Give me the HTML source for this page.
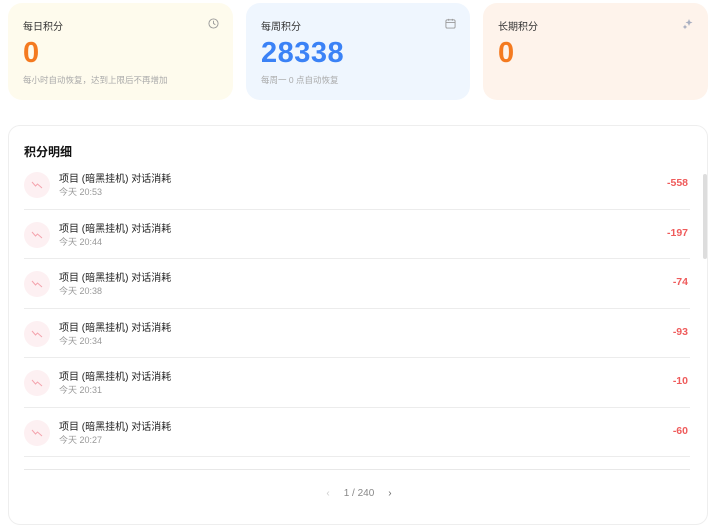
<!DOCTYPE html><html><head><meta charset="utf-8"><style>
*{margin:0;padding:0;box-sizing:border-box}
body{width:720px;height:518px;background:#fff;font-family:"Liberation Sans","Noto Sans CJK SC",sans-serif;position:relative;overflow:hidden;color:#222}
.card{position:absolute;top:3px;height:97px;border-radius:14px;padding:0 16px}
.t{position:absolute;left:15px;top:15px;font-size:10px;color:#333}
.n{position:absolute;left:15px;top:34px;font-size:29px;font-weight:bold;letter-spacing:0.5px}
.s{position:absolute;left:15px;top:71px;font-size:8.5px;color:#aaa}
.ic{position:absolute;right:14px;top:15px}
.panel{position:absolute;left:8px;top:125px;width:700px;height:400px;border:1px solid #eee;border-radius:12px}
h3{position:absolute;left:15px;top:17px;font-size:12px;font-weight:bold;color:#111}
.row{position:absolute;left:15px;width:666px;height:49.5px;border-bottom:1px solid #ececec}
.av{position:absolute;left:0;top:12px;width:26px;height:26px;border-radius:50%;background:#fdf0f2}
.av svg{position:absolute;left:7px;top:8px}
.r1{position:absolute;left:35px;top:10px;font-size:10px;color:#222}
.r2{position:absolute;left:35px;top:25px;font-size:9px;color:#999}
.amt{position:absolute;right:2px;top:17px;font-size:10.5px;font-weight:bold;color:#ef5b5b}
</style></head><body>
<div class="card" style="left:8px;width:225px;background:#fefbed">
<div class="t">每日积分</div><div class="n" style="color:#f47a20">0</div><div class="s">每小时自动恢复，达到上限后不再增加</div>
<svg class="ic" width="11" height="11" viewBox="0 0 12 12"><circle cx="6" cy="6" r="5" fill="none" stroke="#999" stroke-width="1"/><path d="M6 3v3l2 1.3" fill="none" stroke="#999" stroke-width="1"/></svg></div>
<div class="card" style="left:246px;width:224px;background:#eff6fe">
<div class="t">每周积分</div><div class="n" style="color:#3b82f6">28338</div><div class="s">每周一 0 点自动恢复</div>
<svg class="ic" width="11" height="11" viewBox="0 0 12 12"><rect x="1" y="2" width="10" height="9" rx="1.5" fill="none" stroke="#999"/><path d="M1 5h10M4 1v2M8 1v2" stroke="#999"/></svg></div>
<div class="card" style="left:483px;width:225px;background:#fef3eb">
<div class="t">长期积分</div><div class="n" style="color:#f47a20">0</div>
<svg class="ic" width="12" height="12" viewBox="0 0 12 12"><path d="M7 1l1 2.5 2.5 1-2.5 1L7 8 6 5.5l-2.5-1L6 3.5z M3 6.5l.7 1.6L5.3 9l-1.6.7L3 11.3l-.7-1.6L.7 9l1.6-.9z" fill="#a8aec0"/></svg></div>
<div class="panel">
<h3>积分明细</h3>
<div class="row" style="top:34px"><div class="av"><svg width="12" height="10" viewBox="0 0 12 10"><path d="M1 2l3.5 4 2-2L11 8" fill="none" stroke="#f4a3ad" stroke-width="1"/></svg></div><div class="r1">项目 (暗黑挂机) 对话消耗</div><div class="r2">今天 20:53</div><div class="amt">-558</div></div>
<div class="row" style="top:83.5px"><div class="av"><svg width="12" height="10" viewBox="0 0 12 10"><path d="M1 2l3.5 4 2-2L11 8" fill="none" stroke="#f4a3ad" stroke-width="1"/></svg></div><div class="r1">项目 (暗黑挂机) 对话消耗</div><div class="r2">今天 20:44</div><div class="amt">-197</div></div>
<div class="row" style="top:133px"><div class="av"><svg width="12" height="10" viewBox="0 0 12 10"><path d="M1 2l3.5 4 2-2L11 8" fill="none" stroke="#f4a3ad" stroke-width="1"/></svg></div><div class="r1">项目 (暗黑挂机) 对话消耗</div><div class="r2">今天 20:38</div><div class="amt">-74</div></div>
<div class="row" style="top:182.5px"><div class="av"><svg width="12" height="10" viewBox="0 0 12 10"><path d="M1 2l3.5 4 2-2L11 8" fill="none" stroke="#f4a3ad" stroke-width="1"/></svg></div><div class="r1">项目 (暗黑挂机) 对话消耗</div><div class="r2">今天 20:34</div><div class="amt">-93</div></div>
<div class="row" style="top:232px"><div class="av"><svg width="12" height="10" viewBox="0 0 12 10"><path d="M1 2l3.5 4 2-2L11 8" fill="none" stroke="#f4a3ad" stroke-width="1"/></svg></div><div class="r1">项目 (暗黑挂机) 对话消耗</div><div class="r2">今天 20:31</div><div class="amt">-10</div></div>
<div class="row" style="top:281.5px"><div class="av"><svg width="12" height="10" viewBox="0 0 12 10"><path d="M1 2l3.5 4 2-2L11 8" fill="none" stroke="#f4a3ad" stroke-width="1"/></svg></div><div class="r1">项目 (暗黑挂机) 对话消耗</div><div class="r2">今天 20:27</div><div class="amt">-60</div></div>
<div style="position:absolute;left:15px;top:343px;width:666px;border-top:1px solid #e8e8e8"></div>
<div style="position:absolute;left:694px;top:48px;width:4px;height:85px;background:#ddd;border-radius:2px"></div>
<div style="position:absolute;left:0;width:700px;top:362px;text-align:center;font-size:10px;color:#888"><span style="color:#ccc;margin-right:14px">‹</span>1 / 240<span style="color:#666;margin-left:14px">›</span></div>
</div>
</body></html>
